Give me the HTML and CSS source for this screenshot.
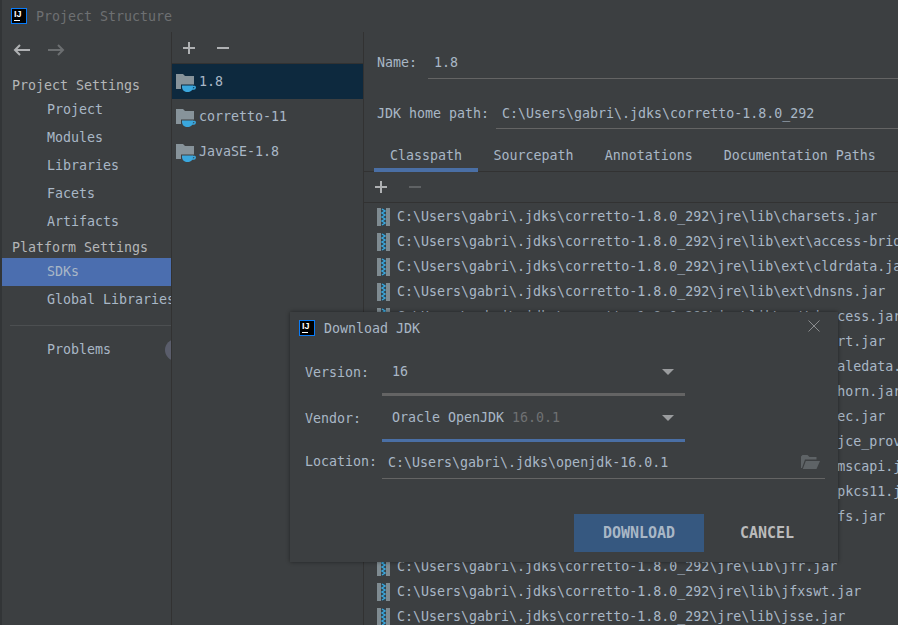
FILE: index.html
```html
<!DOCTYPE html>
<html lang="en">
<head>
  <meta charset="UTF-8">
  <meta name="viewport" content="width=device-width, initial-scale=1.0">
  <title>Project Structure</title>
  <link rel="stylesheet" href="styles.css">
</head>
<body>
  <!-- shared icons -->
  <svg class="icon-defs" aria-hidden="true">
    <symbol id="i-plus" viewBox="0 0 12 12"><path d="M6 0v12M0 6h12" fill="none" stroke="currentColor" stroke-width="2"/></symbol>
    <symbol id="i-minus" viewBox="0 0 12 12"><path d="M0 6h12" fill="none" stroke="currentColor" stroke-width="2"/></symbol>
    <symbol id="i-sdk" viewBox="0 0 20 22">
      <path d="M0 3h7l2 2h9v8.500H5V18H0z" fill="#87939a"/>
      <path d="M6 14.500h11V16c0 3-2.500 5-5.500 5S6 19 6 16z" fill="#3aa7dd"/>
      <path d="M16.500 15.500h2c1 0 1 2.500-.5 2.500h-2" fill="none" stroke="#3aa7dd" stroke-width="1.500"/>
    </symbol>
    <symbol id="i-zip" viewBox="0 0 13 18">
      <path d="M0 0h4v18H0zM9 0h4v18H9z" fill="#7f8b91"/>
      <path d="M4 0h5v18H4z" fill="#33414a"/>
      <path d="M5 1l3 2-3 2 3 2-3 2 3 2-3 2 3 2-3 2" fill="none" stroke="#3aa7dd" stroke-width="1.500"/>
    </symbol>
  </svg>

  <div class="window">
    <header class="titlebar">
      <span class="app-icon"><span class="app-icon-text">IJ</span></span>
      <span class="title">Project Structure</span>
    </header>

    <div class="main">
      <nav class="sidebar">
        <div class="nav-arrows">
          <svg class="arrow" viewBox="0 0 17 12"><path d="M17 6H2M7 1L2 6l5 5" fill="none" stroke="currentColor" stroke-width="2"/></svg>
          <svg class="arrow arrow-off" viewBox="0 0 17 12"><path d="M0 6h15M10 1l5 5-5 5" fill="none" stroke="currentColor" stroke-width="2"/></svg>
        </div>
        <div class="nav-heading">Project Settings</div>
        <div class="nav-item">Project</div>
        <div class="nav-item">Modules</div>
        <div class="nav-item">Libraries</div>
        <div class="nav-item">Facets</div>
        <div class="nav-item">Artifacts</div>
        <div class="nav-heading">Platform Settings</div>
        <div class="nav-item selected">SDKs</div>
        <div class="nav-item">Global Libraries</div>
        <div class="nav-sep"></div>
        <div class="nav-item problems">
          <span class="problems-label">Problems</span>
          <span class="badge"></span>
        </div>
      </nav>

      <section class="sdk-list">
        <div class="sdk-toolbar">
          <svg class="tool"><use href="#i-plus"/></svg>
          <svg class="tool"><use href="#i-minus"/></svg>
        </div>
        <div class="sdk-row selected-row"><svg class="sdk-icon"><use href="#i-sdk"/></svg>1.8</div>
        <div class="sdk-row"><svg class="sdk-icon"><use href="#i-sdk"/></svg>corretto-11</div>
        <div class="sdk-row"><svg class="sdk-icon"><use href="#i-sdk"/></svg>JavaSE-1.8</div>
      </section>

      <section class="detail">
        <div class="form-row name-row">
          <label class="form-label name-label">Name:</label>
          <div class="form-value">1.8</div>
        </div>
        <div class="form-row home-row">
          <label class="form-label home-label">JDK home path:</label>
          <div class="form-value">C:\Users\gabri\.jdks\corretto-1.8.0_292</div>
        </div>

        <div class="tabs">
          <div class="tab active">Classpath</div>
          <div class="tab">Sourcepath</div>
          <div class="tab">Annotations</div>
          <div class="tab">Documentation Paths</div>
        </div>

        <div class="path-toolbar">
          <svg class="tool"><use href="#i-plus"/></svg>
          <svg class="tool tool-off"><use href="#i-minus"/></svg>
        </div>

        <div class="paths">
          <div class="path"><svg class="zip"><use href="#i-zip"/></svg>C:\Users\gabri\.jdks\corretto-1.8.0_292\jre\lib\charsets.jar</div>
          <div class="path"><svg class="zip"><use href="#i-zip"/></svg>C:\Users\gabri\.jdks\corretto-1.8.0_292\jre\lib\ext\access-bridge-64.jar</div>
          <div class="path"><svg class="zip"><use href="#i-zip"/></svg>C:\Users\gabri\.jdks\corretto-1.8.0_292\jre\lib\ext\cldrdata.jar</div>
          <div class="path"><svg class="zip"><use href="#i-zip"/></svg>C:\Users\gabri\.jdks\corretto-1.8.0_292\jre\lib\ext\dnsns.jar</div>
          <div class="path"><svg class="zip"><use href="#i-zip"/></svg>C:\Users\gabri\.jdks\corretto-1.8.0_292\jre\lib\ext\jaccess.jar</div>
          <div class="path"><svg class="zip"><use href="#i-zip"/></svg>C:\Users\gabri\.jdks\corretto-1.8.0_292\jre\lib\ext\jfxrt.jar</div>
          <div class="path"><svg class="zip"><use href="#i-zip"/></svg>C:\Users\gabri\.jdks\corretto-1.8.0_292\jre\lib\ext\localedata.jar</div>
          <div class="path"><svg class="zip"><use href="#i-zip"/></svg>C:\Users\gabri\.jdks\corretto-1.8.0_292\jre\lib\ext\nashorn.jar</div>
          <div class="path"><svg class="zip"><use href="#i-zip"/></svg>C:\Users\gabri\.jdks\corretto-1.8.0_292\jre\lib\ext\sunec.jar</div>
          <div class="path"><svg class="zip"><use href="#i-zip"/></svg>C:\Users\gabri\.jdks\corretto-1.8.0_292\jre\lib\ext\sunjce_provider.jar</div>
          <div class="path"><svg class="zip"><use href="#i-zip"/></svg>C:\Users\gabri\.jdks\corretto-1.8.0_292\jre\lib\ext\sunmscapi.jar</div>
          <div class="path"><svg class="zip"><use href="#i-zip"/></svg>C:\Users\gabri\.jdks\corretto-1.8.0_292\jre\lib\ext\sunpkcs11.jar</div>
          <div class="path"><svg class="zip"><use href="#i-zip"/></svg>C:\Users\gabri\.jdks\corretto-1.8.0_292\jre\lib\ext\zipfs.jar</div>
          <div class="path"><svg class="zip"><use href="#i-zip"/></svg>C:\Users\gabri\.jdks\corretto-1.8.0_292\jre\lib\jce.jar</div>
          <div class="path"><svg class="zip"><use href="#i-zip"/></svg>C:\Users\gabri\.jdks\corretto-1.8.0_292\jre\lib\jfr.jar</div>
          <div class="path"><svg class="zip"><use href="#i-zip"/></svg>C:\Users\gabri\.jdks\corretto-1.8.0_292\jre\lib\jfxswt.jar</div>
          <div class="path"><svg class="zip"><use href="#i-zip"/></svg>C:\Users\gabri\.jdks\corretto-1.8.0_292\jre\lib\jsse.jar</div>
        </div>
      </section>
    </div>

    <!-- Download JDK dialog, sits over the window -->
    <div class="dialog">
      <div class="dialog-title">
        <span class="app-icon"><span class="app-icon-text">IJ</span></span>
        <span class="dialog-name">Download JDK</span>
        <svg class="close" viewBox="0 0 12 12"><path d="M.5.5l11 11M11.500.5l-11 11" fill="none" stroke="currentColor" stroke-width="1"/></svg>
      </div>

      <div class="field-row">
        <label class="field-label">Version:</label>
        <div class="select">
          <span class="select-text">16</span>
          <span class="caret"></span>
        </div>
      </div>
      <div class="field-row">
        <label class="field-label">Vendor:</label>
        <div class="select select-focus">
          <span class="select-text">Oracle OpenJDK <span class="dim">16.0.1</span></span>
          <span class="caret"></span>
        </div>
      </div>
      <div class="field-row location-row">
        <label class="field-label">Location:</label>
        <div class="location">
          <span class="location-text">C:\Users\gabri\.jdks\openjdk-16.0.1</span>
          <svg class="folder" viewBox="0 0 19 14"><path d="M0 1.500L1.500 0h5l2 2h7v2.500H4L1 13H0zM4.800 6H19l-3.500 8H1.800z" fill="currentColor"/></svg>
        </div>
      </div>

      <div class="dialog-buttons">
        <button class="btn btn-primary">DOWNLOAD</button>
        <button class="btn">CANCEL</button>
      </div>
    </div>
  </div>
</body>
</html>
```

FILE: styles.css
```css
* {
  box-sizing: border-box;
}

body {
  margin: 0;
  background-color: #3c3f41;
  color: #a9b7c6;
  font-family: "DejaVu Sans Mono", "Liberation Mono", monospace;
  font-size: 13.3px;
  overflow: hidden;
}

.icon-defs {
  display: none;
}

.window {
  position: relative;
  width: 898px;
  height: 625px;
  border-left: 2px solid #323537;
  overflow: hidden;
}

/* title bar */
.titlebar {
  display: flex;
  align-items: center;
  height: 32px;
  padding-left: 9px;
}

.app-icon {
  display: flex;
  flex-direction: column;
  width: 16px;
  height: 16px;
  padding: 1px 0 0 2px;
  background-color: #000;
  border: 1px solid #087cfa;
}

.app-icon-text {
  color: #fff;
  font-family: "Liberation Sans", sans-serif;
  font-size: 9px;
  font-weight: bold;
  line-height: 9px;
}

.app-icon-text::after {
  content: "";
  display: block;
  width: 6px;
  height: 1px;
  margin-top: 1px;
  background-color: #fff;
}

.title {
  margin-left: 9px;
  color: #6e7072;
}

.main {
  display: flex;
  height: 593px;
}

/* left navigation */
.sidebar {
  flex: none;
  width: 170px;
  border-right: 1px solid #323232;
}

.nav-arrows {
  display: flex;
  align-items: center;
  gap: 18px;
  height: 42px;
  padding: 0 0 6px 11px;
  color: #afb1b3;
}

.arrow {
  width: 17px;
  height: 12px;
}

.arrow-off {
  color: #6b6e70;
}

.nav-heading {
  height: 22px;
  padding-left: 10px;
  line-height: 23px;
  color: #b4b6b8;
  white-space: nowrap;
}

.nav-item {
  height: 28px;
  padding-left: 45px;
  line-height: 28px;
  white-space: nowrap;
  overflow: hidden;
}

.nav-item.selected {
  background-color: #4b6eaf;
}

.nav-sep {
  height: 1px;
  margin: 11px 0 10px 8px;
  background-color: #4c4f51;
}

.problems {
  display: flex;
  align-items: center;
}

.problems-label {
  flex: 1;
}

.badge {
  flex: none;
  width: 22px;
  height: 22px;
  margin-right: -16px;
  border-radius: 50%;
  background-color: #5a5d6b;
}

/* sdk column */
.sdk-list {
  flex: none;
  width: 192px;
  border-right: 1px solid #323232;
}

.sdk-toolbar {
  display: flex;
  align-items: center;
  gap: 22px;
  height: 32px;
  padding-left: 11px;
  color: #afb1b3;
  border-bottom: 1px solid #323232;
}

.tool {
  width: 12px;
  height: 12px;
}

.tool-off {
  color: #5f6264;
}

.sdk-row {
  display: flex;
  align-items: center;
  gap: 3px;
  height: 35px;
  padding-left: 4px;
}

.selected-row {
  background-color: #0d293e;
}

.sdk-icon {
  width: 20px;
  height: 22px;
}

/* right side */
.detail {
  flex: 1;
  min-width: 0;
  overflow: hidden;
}

.form-row {
  display: flex;
}

.name-row {
  height: 33px;
  margin-top: 14px;
}

.home-row {
  height: 32px;
  margin-top: 18px;
}

.form-label {
  flex: none;
  padding-left: 13px;
  line-height: 33px;
}

.name-label {
  width: 64px;
}

.home-label {
  width: 132px;
}

.form-value {
  flex: 1;
  padding-left: 6px;
  line-height: 33px;
  color: #a9b7c6;
  border-bottom: 1px solid #646464;
}

.tabs {
  display: flex;
  height: 31px;
  margin-top: 12px;
  padding-left: 10px;
  border-bottom: 1px solid #323232;
}

.tab {
  height: 31px;
  padding: 0 16px;
  line-height: 29px;
  white-space: nowrap;
}

.tab + .tab {
  padding: 0 15.5px;
}

.tab.active {
  border-bottom: 4px solid #4a6fa5;
}

.path-toolbar {
  display: flex;
  align-items: center;
  gap: 22px;
  height: 31px;
  padding-left: 11px;
  color: #afb1b3;
  border-bottom: 1px solid #323232;
}

.path {
  display: flex;
  align-items: center;
  gap: 7px;
  height: 25px;
  padding: 2px 0 0 13px;
  white-space: nowrap;
}

.zip {
  flex: none;
  width: 13px;
  height: 18px;
}

/* dialog */
.dialog {
  position: absolute;
  left: 288px;
  top: 312px;
  width: 548px;
  height: 250px;
  padding-left: 15px;
  background-color: #3c3f41;
  box-shadow: 0 0 4px rgba(0, 0, 0, 0.45);
}

.dialog-title {
  display: flex;
  align-items: center;
  height: 32px;
  margin: 0 0 6px -6px;
}

.dialog-name {
  margin-left: 9px;
}

.close {
  width: 12px;
  height: 12px;
  margin: -4px 18px 0 auto;
  color: #8a8c8e;
}

.field-row {
  display: flex;
}

.field-label {
  flex: none;
  width: 77px;
  height: 46px;
  line-height: 45px;
}

.select {
  display: flex;
  align-items: center;
  justify-content: space-between;
  width: 303px;
  height: 46px;
  padding: 0 11px 0 10px;
  border-bottom: 3px solid #646464;
}

.select-focus {
  border-bottom-color: #4a6fa5;
}

.dim {
  color: #6f7173;
}

.caret {
  width: 0;
  height: 0;
  border-left: 6px solid transparent;
  border-right: 6px solid transparent;
  border-top: 6px solid #9a9c9e;
}

.location-row {
  margin-top: 4px;
}

.location-row .field-label {
  height: 33px;
  line-height: 32px;
}

.location {
  display: flex;
  align-items: center;
  justify-content: space-between;
  width: 443px;
  height: 33px;
  padding: 0 5px 0 6px;
  border-bottom: 1px solid #646464;
}

.folder {
  width: 19px;
  height: 14px;
  color: #5e6366;
}

.dialog-buttons {
  display: flex;
  margin: 35px 0 0 269px;
}

.btn {
  width: 126px;
  height: 38px;
  padding: 0;
  background: none;
  border: none;
  color: #bbbbbb;
  font-family: inherit;
  font-size: 15px;
  font-weight: bold;
}

.btn-primary {
  width: 130px;
  background-color: #365880;
  color: #a9b7c6;
}
```
